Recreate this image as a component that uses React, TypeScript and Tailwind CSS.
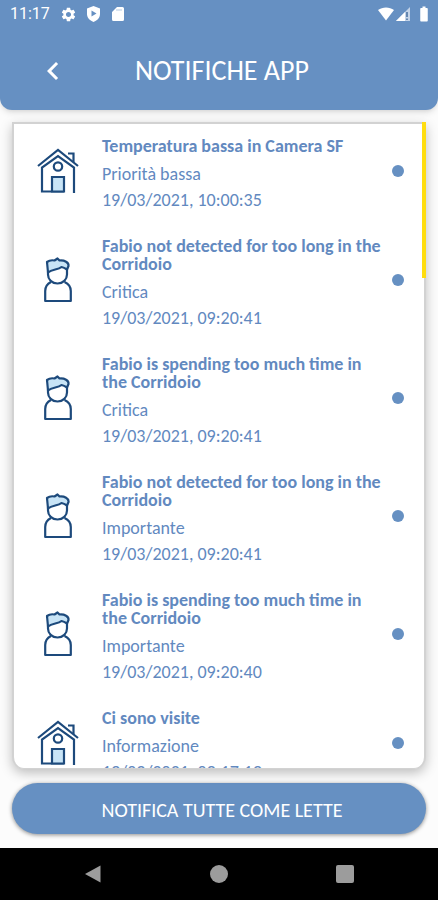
import React from "react";
import { MdChevronLeft, MdSettings, MdBatteryFull } from "react-icons/md";

type Kind = "house" | "person";

interface Notice {
  kind: Kind;
  title: string;
  priority: string;
  date: string;
}

const notices: Notice[] = [
  { kind: "house", title: "Temperatura bassa in Camera SF", priority: "Priorità bassa", date: "19/03/2021, 10:00:35" },
  { kind: "person", title: "Fabio not detected for too long in the Corridoio", priority: "Critica", date: "19/03/2021, 09:20:41" },
  { kind: "person", title: "Fabio is spending too much time in the Corridoio", priority: "Critica", date: "19/03/2021, 09:20:41" },
  { kind: "person", title: "Fabio not detected for too long in the Corridoio", priority: "Importante", date: "19/03/2021, 09:20:41" },
  { kind: "person", title: "Fabio is spending too much time in the Corridoio", priority: "Importante", date: "19/03/2021, 09:20:40" },
  { kind: "house", title: "Ci sono visite", priority: "Informazione", date: "19/03/2021, 09:17:19" },
];

function HouseIcon() {
  return (
    <svg width="42" height="46" viewBox="0 0 42 46" fill="none" stroke="#1d4a7c" strokeWidth="2.2" aria-hidden="true">
      <path d="M1 18 21 2 41 18" />
      <path d="M31 5.500H36.500V14" />
      <path d="M37 45V19.500L21 8 5 19.500V43.500H27" />
      <circle cx="21" cy="18.5" r="4.2" />
      <path d="M15 43.500V29H27V43.500Z" fill="#c8e4f6" />
    </svg>
  );
}

function PersonIcon() {
  return (
    <svg width="28" height="46" viewBox="0 0 28 46" fill="none" stroke="#1d4a7c" strokeWidth="2.2" strokeLinejoin="round" aria-hidden="true">
      <path d="M4 14.500V17.500C4 22.500 8 26.500 13.500 26.500S23 22.500 23 17.500V11" />
      <path d="M4 15.500 3 5C5 3.500 8 3 10.500 3.500L13.500 1.500 15.500 3.500C20.500 3 25 5.500 24.500 9L23 12.500C21.500 11.500 20 10.500 17.500 10C14 13 8 12 4 15.500Z" fill="#c8e4f6" />
      <path d="M7 25C3 27 1.200 30 1.200 34V44H26.800V34C26.800 30 25 27 20.500 25" />
    </svg>
  );
}

function StatusBar() {
  return (
    <div className="flex h-7 items-center pl-[10px] pr-[5px] text-white">
      <span className="font-['Roboto',sans-serif] text-[16px] leading-5">11:17</span>
      <div className="ml-[10px] flex items-center gap-2">
        <MdSettings size={17} />
        <svg width="17" height="16" viewBox="0 0 16 16" aria-hidden="true">
          <path d="M8 0 14.500 2.500V8C14.500 11.500 12 14.500 8 16 4 14.500 1.500 11.500 1.500 8V2.500Z" fill="currentColor" />
          <path d="M6 4.500 11 7.500 6 10.500Z" fill="#6690c2" />
        </svg>
        <svg width="16" height="16" viewBox="0 0 16 16" aria-hidden="true">
          <path d="M7 1H12.500A1.500 1.500 0 0 1 14 2.500V13.500A1.500 1.500 0 0 1 12.500 15H3.500A1.500 1.500 0 0 1 2 13.500V6Z" fill="currentColor" />
          <path d="M7 3V5M9 3V5M11 3V5" stroke="#b5cae2" />
        </svg>
      </div>
      <div className="ml-auto flex items-center">
        <svg width="18" height="16" viewBox="0 0 18 16" aria-hidden="true">
          <path d="M1 4C5.500 .5 12.500 .5 17 4L9 14.500Z" fill="currentColor" />
        </svg>
        <svg width="16" height="16" viewBox="0 0 16 16" aria-hidden="true">
          <path d="M15 1V15H1Z" fill="#c3d3e8" />
          <path d="M10 6V15H1Z" fill="currentColor" />
          <path d="M12 6V11M12 12.500V14" stroke="#456f9f" strokeWidth="1.500" />
        </svg>
        <MdBatteryFull size={18} className="ml-1" />
      </div>
    </div>
  );
}

function NoticeRow({ notice }: { notice: Notice }) {
  return (
    <li className="flex items-center pr-5">
      <div className="flex w-[88px] shrink-0 justify-center">
        {notice.kind === "house" ? <HouseIcon /> : <PersonIcon />}
      </div>
      <div className="min-w-0 flex-1 pt-4 pr-2 pb-2 text-[18px]">
        <h2 className="leading-[18px] font-bold">{notice.title}</h2>
        <p className="mt-[6px] leading-[26px]">{notice.priority}</p>
        <p className="leading-[26px]">{notice.date}</p>
      </div>
      <span className="size-3 shrink-0 rounded-full bg-[#6690c2]" />
    </li>
  );
}

export default function App() {
  return (
    <div className="flex h-screen flex-col bg-[#fcfcfc] font-['Carlito','Lato',sans-serif] text-[#6289bf]">
      <header className="h-[110px] shrink-0 rounded-b-xl bg-[#6690c2] text-white shadow-md">
        <StatusBar />
        <div className="grid h-[86px] grid-cols-[106px_1fr_100px] items-center">
          <button type="button" aria-label="Indietro" className="flex justify-center">
            <MdChevronLeft size={36} />
          </button>
          <h1 className="text-center text-[28px] leading-8 whitespace-nowrap">NOTIFICHE APP</h1>
        </div>
      </header>

      <main className="flex min-h-0 flex-1 flex-col px-3 pt-3 pb-[14px]">
        <section className="relative min-h-0 flex-1 rounded-b-xl border-2 border-b-1 border-[#d2d2d2] bg-white shadow-[0_4px_12px_rgba(0,0,0,0.25)]">
          <div className="h-full overflow-y-auto rounded-b-xl [scrollbar-width:none]">
            <ul className="-mt-[3px]">
              {notices.map((n, i) => (
                <NoticeRow key={i} notice={n} />
              ))}
            </ul>
          </div>
          <span className="absolute -top-0.5 -right-0.5 h-[156px] w-1 bg-[#ffdd0f]" />
        </section>
        <button
          type="button"
          className="mt-[14px] h-[51px] shrink-0 rounded-full bg-[#6690c2] pt-0.5 pl-[6px] text-[20px] text-white shadow-[0_1px_4px_rgba(0,0,0,0.45)]"
        >
          NOTIFICA TUTTE COME LETTE
        </button>
      </main>

      <nav className="flex h-[52px] shrink-0 items-center justify-center gap-[108px] bg-black text-[#9c9c9c]">
        <button type="button" aria-label="Indietro">
          <svg width="18" height="18" viewBox="0 0 18 18" aria-hidden="true">
            <path d="M1 9 16.500 .5V17.500Z" fill="currentColor" />
          </svg>
        </button>
        <button type="button" aria-label="Home" className="size-[18px] rounded-full bg-[#9c9c9c]" />
        <button type="button" aria-label="Recenti" className="size-[18px] rounded-xs bg-[#9c9c9c]" />
      </nav>
    </div>
  );
}
